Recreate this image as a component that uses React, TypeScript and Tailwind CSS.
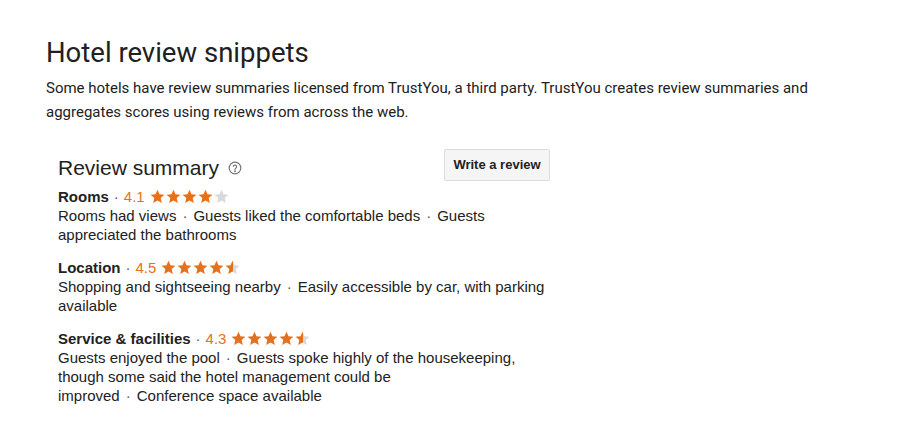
import React from 'react';

const ORANGE = '#e7711b';

function Star({ fill, id }: { fill: number; id: string }) {
  // fill: 0..1 portion filled from the left
  return (
    <svg width="15" height="15" viewBox="0 0 24 24" className="shrink-0">
      <defs>
        <linearGradient id={id}>
          <stop offset={fill} stopColor={ORANGE} />
          <stop offset={fill} stopColor="#d9d9d9" />
        </linearGradient>
      </defs>
      <path
        d="M12 1.2l3.2 7.3 7.9.7-6 5.3 1.8 7.8L12 18.2l-6.9 4.1 1.8-7.8-6-5.3 7.9-.7z"
        fill={`url(#${id})`}
      />
    </svg>
  );
}

function Stars({ value, name }: { value: number; name: string }) {
  return (
    <span className="inline-flex items-center gap-[1px] ml-[5px]">
      {[0, 1, 2, 3, 4].map((i) => {
        const f = Math.max(0, Math.min(1, value - i));
        return <Star key={i} id={`${name}-${i}`} fill={f >= 0.9 ? 1 : f <= 0.15 ? 0 : 0.55} />;
      })}
    </span>
  );
}

const SECTIONS = [
  {
    key: 'rooms',
    label: 'Rooms',
    score: 4.1,
    parts: ['Rooms had views', 'Guests liked the comfortable beds', 'Guests appreciated the bathrooms'],
  },
  {
    key: 'location',
    label: 'Location',
    score: 4.5,
    parts: ['Shopping and sightseeing nearby', 'Easily accessible by car, with parking available'],
  },
  {
    key: 'service',
    label: 'Service & facilities',
    score: 4.3,
    parts: [
      'Guests enjoyed the pool',
      'Guests spoke highly of the housekeeping, though some said the hotel management could be improved',
      'Conference space available',
    ],
  },
];

export default function App() {
  return (
    <div className="w-[900px] h-[440px] bg-white text-[#222] px-[46px] pt-[33px]">
      <h1 className="font-['Roboto',sans-serif] text-[27.5px] leading-[40px] text-[#212121]">
        Hotel review snippets
      </h1>
      <p className="font-['Roboto',sans-serif] text-[15px] leading-[24px] text-[#212121] mt-[3px] w-[790px]">
        Some hotels have review summaries licensed from TrustYou, a third party. TrustYou creates review summaries and
        aggregates scores using reviews from across the web.
      </p>

      <div className="ml-[12px] mt-[25px] w-[492px] font-['Liberation_Sans',Arial,sans-serif]">
        <div className="flex items-start justify-between">
          <div className="flex items-center gap-[9px] pt-[6px]">
            <span className="text-[21px] leading-[26px] text-[#222]">Review summary</span>
            <svg width="14" height="14" viewBox="0 0 24 24" fill="none" stroke="#757575" strokeWidth="2">
              <circle cx="12" cy="12" r="10" />
              <path d="M9.1 9a3 3 0 0 1 5.8 1c0 2-3 2.5-3 4.5" strokeLinecap="round" />
              <circle cx="12" cy="17.6" r="0.6" fill="#757575" />
            </svg>
          </div>
          <button className="h-[32px] w-[106px] bg-[#f5f5f5] border border-[#dcdcdc] rounded-[2px] text-[13px] font-bold text-[#222]">
            Write a review
          </button>
        </div>

        <div className="flex flex-col gap-[14px] mt-[6px]">
          {SECTIONS.map((s) => (
            <div key={s.key} className="text-[15px] leading-[19px]">
              <div className="flex items-center">
                <span className="font-bold text-[#222]">{s.label}</span>
                <span className="text-[#555] mx-[5px]">·</span>
                <span style={{ color: ORANGE }}>{s.score}</span>
                <Stars value={s.score} name={s.key} />
              </div>
              <p className="text-[#222]">
                {s.parts.map((p, i) => (
                  <React.Fragment key={i}>
                    {i > 0 && <span className="px-[6px] text-[#555]">·</span>}
                    {p}
                  </React.Fragment>
                ))}
              </p>
            </div>
          ))}
        </div>
      </div>
    </div>
  );
}
